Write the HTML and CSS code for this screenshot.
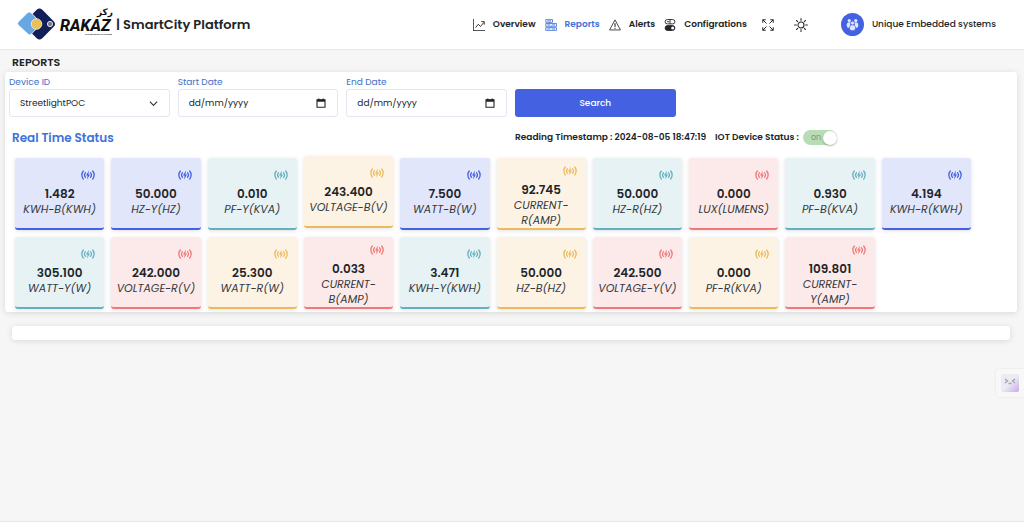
FILE: index.html
```html
<!DOCTYPE html>
<html lang="en">
  <head>
    <meta charset="UTF-8" />
    <meta name="viewport" content="width=device-width, initial-scale=1.0" />
    <title>SmartCity Platform - Reports</title>
    <link rel="stylesheet" href="styles.css">
  </head>
  <body>
    <svg class="sprite" aria-hidden="true">
      <symbol id="signal" viewBox="0 0 14 10">
        <g fill="none" stroke="currentColor" stroke-linecap="round">
          <path d="M2.3 1C.4 3.2.4 6.8 2.3 9M11.7 1c1.9 2.2 1.9 5.8 0 8" stroke-width="1.3" />
          <path d="M4.5 2.6c-1.1 1.3-1.1 3.5 0 4.8M9.5 2.6c1.1 1.3 1.1 3.5 0 4.8" stroke-width="1.2" />
        </g>
        <path d="M7.9.5 5 5.5h1.6L6.1 9.5 9 4.5H7.4z" fill="currentColor" />
      </symbol>
      <symbol id="calendar" viewBox="0 0 10 10">
        <path d="M1 1.8h8v7.4H1z" fill="none" stroke="currentColor" stroke-width="1.1" />
        <path d="M1 1.5h8v2.2H1zM2.2.4h1.2v1.2H2.2zM6.6.4h1.2v1.2H6.6z" fill="currentColor" />
      </symbol>
    </svg>

    <header class="navbar">
      <a href="#" class="brand">
        <svg class="logo" viewBox="0 0 96 38" role="img" aria-label="Rakaz">
          <rect x="10.5" y="6" width="24" height="24" rx="4" transform="rotate(45 22.5 18)" fill="#12205a" />
          <path d="M1.2 16 10.5 6.8q1.8-1.8 3.6 0L24.5 17.5 14 28.3q-1.4 1.3-2.8 0L1.2 19q-1.6-1.5 0-3z" fill="#66a8e3" stroke="#fff" stroke-width=".8" />
          <circle cx="19.5" cy="18" r="5.3" fill="#edc057" stroke="#e8edf5" stroke-width=".8" />
          <circle cx="33" cy="18" r="2.6" fill="#777b86" stroke="#dfe2ea" stroke-width="1" />
          <text x="43" y="25" class="logo-name">RAKAZ</text>
          <text x="80" y="9" class="logo-arabic">ركز</text>
          <text x="68" y="29" class="logo-tag">THE SMARTCITY PLATFORM</text>
        </svg>
        <span>| SmartCity Platform</span>
      </a>
      <nav class="menu">
        <a href="#">
          <svg viewBox="0 0 16 16" fill="currentColor"><path d="M0 0h1v15h15v1H0z" /><path d="m3.5 11.5 3.5-4.5 3 3 4.5-5.500M11 3.500h4V7.500" fill="none" stroke="currentColor" stroke-width="1.2" /></svg>
          Overview
        </a>
        <a href="#" class="active">
          <svg viewBox="0 0 16 16" fill="none" stroke="currentColor" stroke-width="1.1"><path d="M1 .8h9v3.6H1zM1 6h14.4v3.7H1zM1 11.5h14.4v3.7H1zM3 2.6h5M3 7.8h4M9 7.8h4.5M3 13.3h4M9 13.3h4.5M6 4.4V6M8 9.7v1.8" /></svg>
          Reports
        </a>
        <a href="#">
          <svg viewBox="0 0 16 16" fill="none" stroke="currentColor" stroke-width="1.1"><path d="M8 1.2 15.3 14.6H.7z" stroke-linejoin="round" /><path d="M8 5.5v4.8M8 11.5v1.5" stroke-width="1.5" /></svg>
          Alerts
        </a>
        <a href="#">
          <svg viewBox="0 0 16 16" fill="none" stroke="currentColor" stroke-width="1.2"><rect x="1.5" y=".7" width="13" height="5.8" rx="2.9" /><path d="M8 .7v5.8M4 3.6h3" /><rect x="1.5" y="8.8" width="13" height="6.5" rx="3.2" fill="currentColor" /><circle cx="11.5" cy="12" r="2" fill="#fff" stroke="none" /></svg>
          Configrations
        </a>
      </nav>
      <div class="tools">
        <button type="button" aria-label="Full screen">
          <svg viewBox="0 0 16 16" fill="none" stroke="currentColor" stroke-width="1.3"><path d="M6 6 1 1M1 5V1h4M10 6l5-5M11 1h4v4M6 10l-5 5M1 11v4h4M10 10l5 5M15 11v4h-4" /></svg>
        </button>
        <button type="button" class="theme" aria-label="Change theme">
          <svg viewBox="0 0 16 16" fill="none" stroke="currentColor" stroke-width="1.2" stroke-linecap="round"><circle cx="8" cy="8" r="3.4" /><path d="M8 .7v2M8 13.3v2M.7 8h2M13.3 8h2M2.8 2.8l1.4 1.4M11.8 11.8l1.4 1.4M2.8 13.2l1.4-1.4M11.8 4.2l1.4-1.4" /></svg>
        </button>
      </div>
      <a href="#" class="user">
        <span class="avatar">
          <svg viewBox="0 0 16 16" fill="#dfe5ff"><circle cx="4" cy="3.2" r="2" /><circle cx="12" cy="3.2" r="2" /><path d="M.8 9.5c0-3.5 1-4.3 3.2-4.3 1 0 1.6.2 2 .7C5 7 5 8.3 5.3 9.5L3.6 12H2zM15.2 9.5c0-3.5-1-4.3-3.2-4.3-1 0-1.6.2-2 .7 1 1.1 1 2.4.7 3.6l1.7 2.5H14z" /><g stroke="#4361e0" stroke-width=".6"><circle cx="8" cy="6.2" r="2.3" /><path d="M4.3 13c0-3.5 1.3-4.5 3.7-4.5s3.7 1 3.7 4.5L10.3 15.5H5.7z" /></g></svg>
        </span>
        Unique Embedded systems
      </a>
    </header>

    <main class="content">
      <h1>REPORTS</h1>

      <section class="card">
        <form class="filters">
          <div class="field">
            <label for="device">Device ID</label>
            <select id="device">
              <option>StreetlightPOC</option>
            </select>
          </div>
          <div class="field">
            <label for="start">Start Date</label>
            <div class="date">
              <input type="text" id="start" placeholder="dd/mm/yyyy">
              <svg><use href="#calendar" /></svg>
            </div>
          </div>
          <div class="field">
            <label for="end">End Date</label>
            <div class="date">
              <input type="text" id="end" placeholder="dd/mm/yyyy">
              <svg><use href="#calendar" /></svg>
            </div>
          </div>
          <button type="submit" class="search">Search</button>
        </form>

        <div class="status">
          <h2>Real Time Status</h2>
          <div class="reading">
            <span>Reading Timestamp : 2024-08-05 18:47:19</span>
            <label class="device-status">
              IOT Device Status :
              <span class="switch"><input type="checkbox" checked disabled><span>on</span></span>
            </label>
          </div>
        </div>

        <div class="tiles">
          <div class="tile blue"><svg><use href="#signal" /></svg><strong>1.482</strong><em>KWH-B(KWH)</em></div>
          <div class="tile blue"><svg><use href="#signal" /></svg><strong>50.000</strong><em>HZ-Y(HZ)</em></div>
          <div class="tile teal"><svg><use href="#signal" /></svg><strong>0.010</strong><em>PF-Y(KVA)</em></div>
          <div class="tile amber raised"><svg><use href="#signal" /></svg><strong>243.400</strong><em>VOLTAGE-B(V)</em></div>
          <div class="tile blue"><svg><use href="#signal" /></svg><strong>7.500</strong><em>WATT-B(W)</em></div>
          <div class="tile amber"><svg><use href="#signal" /></svg><strong>92.745</strong><em>CURRENT-<br>R(AMP)</em></div>
          <div class="tile teal"><svg><use href="#signal" /></svg><strong>50.000</strong><em>HZ-R(HZ)</em></div>
          <div class="tile red"><svg><use href="#signal" /></svg><strong>0.000</strong><em>LUX(LUMENS)</em></div>
          <div class="tile teal"><svg><use href="#signal" /></svg><strong>0.930</strong><em>PF-B(KVA)</em></div>
          <div class="tile blue"><svg><use href="#signal" /></svg><strong>4.194</strong><em>KWH-R(KWH)</em></div>
          <div class="tile teal"><svg><use href="#signal" /></svg><strong>305.100</strong><em>WATT-Y(W)</em></div>
          <div class="tile red"><svg><use href="#signal" /></svg><strong>242.000</strong><em>VOLTAGE-R(V)</em></div>
          <div class="tile amber"><svg><use href="#signal" /></svg><strong>25.300</strong><em>WATT-R(W)</em></div>
          <div class="tile red"><svg><use href="#signal" /></svg><strong>0.033</strong><em>CURRENT-<br>B(AMP)</em></div>
          <div class="tile teal"><svg><use href="#signal" /></svg><strong>3.471</strong><em>KWH-Y(KWH)</em></div>
          <div class="tile amber"><svg><use href="#signal" /></svg><strong>50.000</strong><em>HZ-B(HZ)</em></div>
          <div class="tile red"><svg><use href="#signal" /></svg><strong>242.500</strong><em>VOLTAGE-Y(V)</em></div>
          <div class="tile amber"><svg><use href="#signal" /></svg><strong>0.000</strong><em>PF-R(KVA)</em></div>
          <div class="tile red"><svg><use href="#signal" /></svg><strong>109.801</strong><em>CURRENT-<br>Y(AMP)</em></div>
        </div>
      </section>

      <section class="card results"></section>
    </main>

    <footer></footer>

    <button type="button" class="assistant" aria-label="Assistant">
      <svg viewBox="0 0 18 18">
        <defs>
          <linearGradient id="glow" x1="0" y1="0" x2="1" y2="1">
            <stop offset=".5" stop-color="#ebebf2" />
            <stop offset="1" stop-color="#c9a8ea" />
          </linearGradient>
        </defs>
        <rect width="18" height="18" rx="2" fill="url(#glow)" />
        <path d="m4 5 2.5 2L4 9M14 5l-2.5 2L14 9M7.5 9.5h3" fill="none" stroke="#a0a2ad" stroke-width="1.4" />
      </svg>
    </button>
  </body>
</html>
```

FILE: styles.css
```css
* {
  box-sizing: border-box;
}
body {
  font-family: Poppins, Inter, sans-serif;
  font-size: 9px;
  color: #212529;
  background: #f6f6f6;
  margin: 0;
  display: flex;
  flex-direction: column;
  min-height: 100vh;
}
a {
  color: inherit;
  text-decoration: none;
}
button,
input,
select {
  font: inherit;
  color: inherit;
}
.sprite {
  display: none;
}

/* top bar */
.navbar {
  display: flex;
  align-items: center;
  height: 50px;
  padding: 0 28px 0 17px;
  background: #fff;
  border-bottom: 1px solid #e6e6f2;
}
.brand {
  display: flex;
  align-items: center;
  gap: 3px;
  margin-right: auto;
  font-size: 13px;
  font-weight: 600;
  white-space: nowrap;
}
.logo {
  width: 96px;
  height: 38px;
  overflow: visible;
}
.logo text {
  fill: #111;
}
.logo-name {
  font: italic 800 16px Roboto, sans-serif;
}
.logo-arabic {
  font: bold 9px "DejaVu Sans", sans-serif;
}
.logo-tag {
  font: bold 2px "Open Sans", sans-serif;
}
.menu {
  display: flex;
  gap: 9px;
  font-weight: 600;
}
.menu a {
  display: flex;
  align-items: center;
  gap: 8px;
}
.menu svg,
.tools svg {
  width: 12px;
  height: 12px;
}
.menu .active {
  color: #3e72d9;
}
.tools {
  display: flex;
  align-items: center;
  gap: 20px;
  margin: 0 33px 0 15px;
}
.tools button {
  display: flex;
  padding: 0;
  background: none;
  border: none;
  cursor: pointer;
}
.tools .theme svg {
  width: 14px;
  height: 14px;
}
.user {
  display: flex;
  align-items: center;
  gap: 8px;
  font-weight: 500;
  white-space: nowrap;
}
.avatar {
  display: flex;
  align-items: center;
  justify-content: center;
  width: 23px;
  height: 23px;
  background: #4361e0;
  border-radius: 50%;
}
.avatar svg {
  width: 13px;
  height: 13px;
}

/* page */
.content {
  flex: 1;
  padding: 4px 7px 0 5px;
}
h1 {
  margin: 0 7px 2px;
  font-size: 11px;
  font-weight: 600;
  line-height: 16px;
}
.card {
  background: #fff;
  border-radius: 3px;
  box-shadow: 0 1px 6px rgba(0, 0, 0, 0.12);
}
.results {
  margin: 14px 7px 0;
  padding: 7px;
}

/* filters */
.filters {
  display: grid;
  grid-template-columns: repeat(6, 1fr);
  align-items: end;
  padding-top: 3px;
}
.field {
  padding: 0 4px;
}
.field label {
  display: block;
  color: #3e6fc9;
  line-height: 14px;
}
.field input,
.field select {
  display: block;
  width: 100%;
  height: 28px;
  padding: 0 10px;
  background: #fff;
  border: 1px solid #e6e6f2;
  border-radius: 3px;
}
.field select {
  appearance: none;
  background: #fff url("data:image/svg+xml,%3Csvg xmlns='http://www.w3.org/2000/svg' viewBox='0 0 10 10'%3E%3Cpath d='M1 3l4 4 4-4' fill='none' stroke='%23343a40' stroke-width='1.3'/%3E%3C/svg%3E") no-repeat right 11px center / 9px;
}
.field input::placeholder {
  color: #212529;
  opacity: 1;
}
.date {
  position: relative;
}
.date svg {
  position: absolute;
  top: 9px;
  right: 12px;
  width: 10px;
  height: 10px;
}
.search {
  height: 28px;
  margin: 0 4px;
  background: #4361e0;
  border: none;
  border-radius: 3px;
  color: #fff;
  font-weight: 500;
  cursor: pointer;
}

/* status row */
.status {
  display: grid;
  grid-template-columns: 1fr 1fr;
  align-items: center;
  height: 41px;
}
h2 {
  margin: 0 7px;
  color: #3e72d9;
  font-size: 12px;
  font-weight: 600;
}
.reading {
  display: flex;
  align-items: center;
  gap: 9px;
  padding-left: 4px;
  font-weight: 600;
  white-space: nowrap;
}
.device-status {
  display: flex;
  align-items: center;
  gap: 4px;
}
.switch {
  display: flex;
  align-items: center;
  width: 34px;
  height: 15px;
  padding-left: 8px;
  background: #b8dcb4;
  border-radius: 8px;
  color: #7f987d;
  font-size: 8px;
  font-weight: 400;
}
.switch input {
  appearance: none;
  order: 2;
  width: 14px;
  height: 14px;
  margin: 0 0 0 auto;
  background: #fff;
  border-radius: 50%;
  box-shadow: 0 1px 2px rgba(0, 0, 0, 0.3);
}

/* meter tiles */
.tiles {
  display: grid;
  grid-template-columns: repeat(10, 1fr);
  grid-auto-rows: 72px;
  gap: 7px;
  padding: 0 46px 3px 10px;
}
.tile {
  display: flex;
  flex-direction: column;
  align-items: center;
  justify-content: safe center;
  padding: 8px 0;
  border-bottom: 2px solid;
  border-radius: 3px;
  box-shadow: 0 1px 4px rgba(0, 0, 0, 0.12);
}
.tile:hover,
.tile.raised {
  transform: translateY(-2px);
}
.tile svg {
  flex: none;
  align-self: flex-end;
  width: 14px;
  height: 10px;
  margin: 0 9px 6px;
}
.tile strong {
  color: #212529;
  font-size: 12px;
  font-weight: 600;
  line-height: 16px;
}
.tile em {
  color: #343a40;
  font-size: 11px;
  line-height: 15px;
  text-align: center;
  white-space: nowrap;
}
.blue {
  color: #4361e0;
  background: #e1e6fa;
}
.teal {
  color: #64b0c0;
  background: #e6f2f4;
}
.amber {
  color: #ecba5c;
  background: #fcf3e5;
}
.red {
  color: #f07878;
  background: #fce9e9;
}

footer {
  padding: 5px;
  background: #fff;
  border-top: 1px solid #e6e6f2;
}
.assistant {
  position: fixed;
  top: 369px;
  right: 0;
  display: flex;
  padding: 5px;
  background: #f8f8f9;
  border: none;
  border-radius: 4px 0 0 4px;
  box-shadow: 0 0 3px rgba(0, 0, 0, 0.08);
  cursor: pointer;
}
.assistant svg {
  width: 18px;
  height: 18px;
}
```
